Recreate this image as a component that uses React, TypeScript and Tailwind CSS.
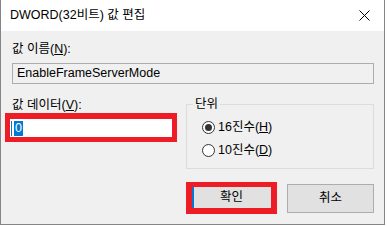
import React from 'react';

const font = { fontFamily: '"Liberation Sans", "Noto Sans CJK KR", sans-serif' };

const Radio: React.FC<{ checked?: boolean; label: string; hotkey: string }> = ({ checked, label, hotkey }) => (
    <div className="flex items-center h-[16px]">
        <span className="w-[13px] h-[13px] rounded-full border border-[#333333] bg-white flex items-center justify-center">
            {checked && <span className="w-[7px] h-[7px] rounded-full bg-[#333333]" />}
        </span>
        <span className="ml-[3px] text-[12.5px] leading-[16px] text-black">
            {label}(<u>{hotkey}</u>)
        </span>
    </div>
);

export default function App() {
    return (
        <div className="w-[387px] h-[226px] bg-white overflow-hidden" style={font}>
            <div className="w-[385px] h-[225px] flex flex-col border-x border-b border-[#858585] bg-[#f0f0f0]">
                {/* Title bar */}
                <div className="h-[31px] bg-white flex items-center justify-between pl-[9px] pr-[16px] shrink-0">
                    <span className="text-[12.5px] text-black">DWORD(32비트) 값 편집</span>
                    <svg width="11" height="11" viewBox="0 0 11 11" className="mr-[-2px]">
                        <path d="M0.5 0.5 L10.5 10.5 M10.5 0.5 L0.5 10.5" stroke="#000" strokeWidth="1" />
                    </svg>
                </div>

                {/* Body */}
                <div className="flex flex-col pl-[11px] pr-[10px] pt-[10px] pb-[10px]">
                    <div className="h-[16px] text-[12.5px] leading-[16px] text-black">
                        값 이름(<u>N</u>):
                    </div>
                    <div className="mt-[6px] h-[21px] border border-[#adadad] bg-[#f0f0f0] flex items-center pl-[4px] text-[12.5px] text-black">
                        EnableFrameServerMode
                    </div>

                    <div className="mt-[13px] flex">
                        {/* Value data */}
                        <div className="w-[174px] flex flex-col">
                            <div className="h-[16px] text-[12.5px] leading-[16px] text-black">
                                값 데이터(<u>V</u>):
                            </div>
                            <div className="ml-[-7px] w-[172px] h-[29px] border-[5px] border-t-[6px] border-[#ee1c25] bg-white flex items-center pl-[1px]">
                                <span className="w-[1px] h-[15px] bg-[#0078d7]" />
                                <span className="ml-[2px] h-[15px] w-[9px] bg-[#0078d7] text-white text-[12.5px] leading-[15px] flex justify-center">
                                    0
                                </span>
                            </div>
                        </div>

                        {/* Unit group */}
                        <div className="w-[188px] pt-[7px]">
                            <div className="relative h-[65px] border border-[#dcdcdc] pl-[15px] pt-[14px] flex flex-col gap-[7px]">
                                <span className="absolute left-[6px] top-[-9px] px-[2px] bg-[#f0f0f0] text-[12.5px] leading-[16px] text-black">
                                    단위
                                </span>
                                <Radio checked label="16진수" hotkey="H" />
                                <Radio label="10진수" hotkey="D" />
                            </div>
                        </div>
                    </div>

                    {/* Buttons */}
                    <div className="mt-[13px] flex items-center justify-end gap-[10px]">
                        <div className="w-[91px] h-[32px] border-[6px] border-t-[5px] border-[#ee1c25] bg-[#e1e1e1] flex">
                            <span className="w-[2px] h-full bg-[#0078d7]" />
                            <span className="flex-1 flex items-center justify-center text-[12.5px] text-black pr-[2px]">
                                확인
                            </span>
                        </div>
                        <div className="w-[87px] h-[29px] border border-[#adadad] bg-[#e1e1e1] flex items-center justify-center text-[12.5px] text-black">
                            취소
                        </div>
                    </div>
                </div>
            </div>
        </div>
    );
}
